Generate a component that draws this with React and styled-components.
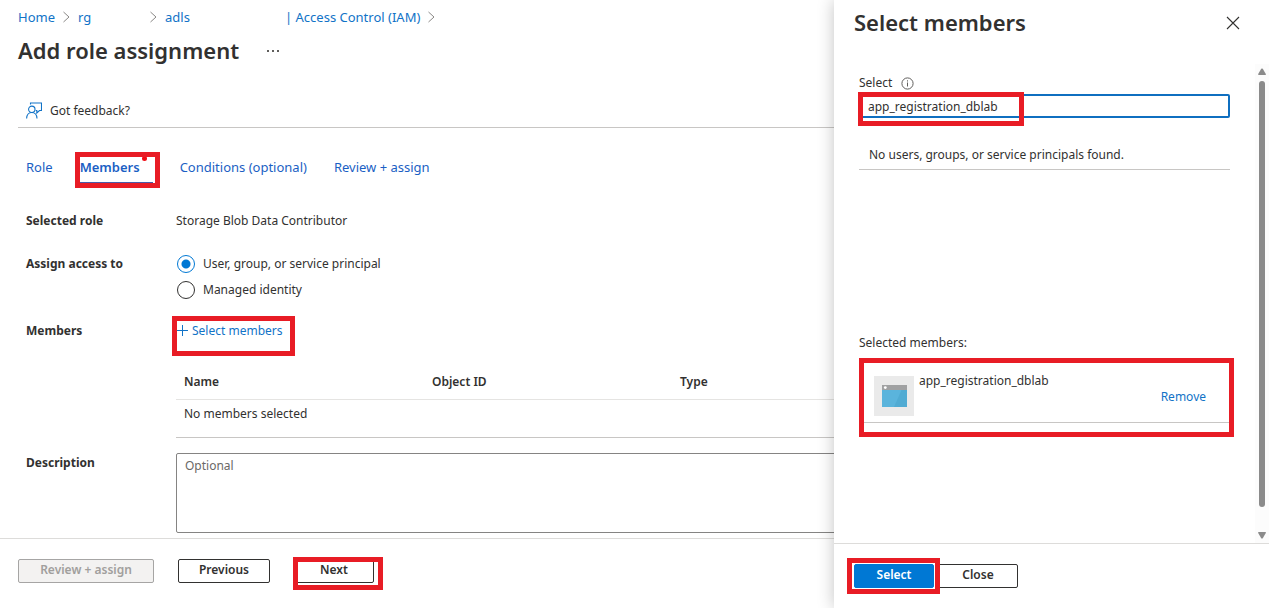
import React, { useState } from "react";
import styled, { createGlobalStyle } from "styled-components";

const Global = createGlobalStyle`
  * { box-sizing: border-box; }
  body {
    margin: 0;
    background: #fff;
    color: #323130;
    font: 12px/20px "Noto Sans", "Segoe UI", sans-serif;
  }
  button, input, textarea { font: inherit; color: inherit; }
  h1, h2, p { margin: 0; }
`;

const Page = styled.div`
  position: relative;
  display: flex;
  flex-direction: column;
  min-height: 100vh;
  overflow: hidden;
`;

const Main = styled.main`
  flex: 1;
  padding: 0 0 4px 18px;
`;

/* Annotation frame laid over the part it wraps. */
const Marked = styled.div`
  position: relative;
  display: flex;
  width: ${(p) => (p.$block ? "auto" : "fit-content")};
  > * { flex: ${(p) => (p.$block ? "1" : "none")}; }
  &::after {
    content: "";
    position: absolute;
    inset: ${(p) => p.$inset};
    border: 5px solid #e81c25;
    pointer-events: none;
  }
`;

const Link = styled.a`
  color: #1173c7;
  text-decoration: none;
`;

const Breadcrumb = styled.nav`
  display: flex;
  align-items: center;
  height: 34px;
  gap: 7px;
  font-size: 13px;
  white-space: nowrap;
`;

const Crumb = styled.span`
  flex: none;
  width: ${(p) => p.$width || "auto"};
`;

const TitleRow = styled.div`
  display: flex;
  align-items: center;
  gap: 28px;
  height: 34px;
`;

const Title = styled.h1`
  padding-bottom: 2px;
  font-size: 22px;
  line-height: 32px;
  font-weight: 600;
  white-space: nowrap;
`;

const IconButton = styled.button`
  display: flex;
  align-items: center;
  gap: 8px;
  padding: 0;
  border: 0;
  background: none;
  cursor: pointer;
`;

const Toolbar = styled.div`
  display: flex;
  height: 36px;
  margin-top: 24px;
  padding: 2px 0 0 8px;
  border-bottom: 1px solid #c8c6c4;
`;

const Tabs = styled.nav`
  display: flex;
  gap: 27px;
  margin: 24px 0 27px;
  padding-left: 8px;
  font-size: 13px;
`;

const Tab = styled.a`
  position: relative;
  height: 32px;
  line-height: 30px;
  color: #1b5fc4;
  text-decoration: none;
  white-space: nowrap;
  min-width: ${(p) => (p.$active ? "73px" : "0")};
  font-weight: ${(p) => (p.$active ? 600 : 400)};
  border-bottom: 2px solid ${(p) => (p.$active ? "#4a5aa8" : "transparent")};
`;

const Dot = styled.span`
  position: absolute;
  top: 4px;
  right: 6px;
  width: 5px;
  height: 5px;
  border-radius: 50%;
  background: #f00b14;
`;

const Field = styled.div`
  display: grid;
  grid-template-columns: 150px 1fr;
  padding-left: 8px;
  margin-bottom: ${(p) => p.$gap || "0"};
`;

const FieldLabel = styled.label`
  font-weight: 700;
  line-height: ${(p) => (p.$tall ? "26px" : "20px")};
`;

const RadioGroup = styled.div`
  display: grid;
`;

const RadioLabel = styled.label`
  display: flex;
  align-items: center;
  gap: 8px;
  height: 26px;
`;

const Radio = styled.input`
  appearance: none;
  width: 18px;
  height: 18px;
  margin: 0 0 0 1px;
  border: 1px solid #323130;
  border-radius: 50%;
  &:checked {
    border-color: #0078d4;
    background: radial-gradient(circle, #0078d4 4px, transparent 5px);
  }
`;

const AddLink = styled(IconButton)`
  gap: 4px;
  height: 20px;
  color: #1173c7;
`;

const Table = styled.table`
  width: 100%;
  margin-top: 23px;
  border-collapse: separate;
  border-spacing: 0;
  border-bottom: 1px solid #c8c6c4;
  table-layout: fixed;
`;

const Th = styled.th`
  width: ${(p) => p.$width || "auto"};
  height: 36px;
  padding: 0 8px;
  text-align: left;
  font-weight: 600;
  border-bottom: 1px solid #e5e4e2;
`;

const Td = styled.td`
  height: 37px;
  padding: 4px 8px;
  vertical-align: top;
`;

const TextArea = styled.textarea`
  display: block;
  width: 100%;
  height: 80px;
  padding: 2px 8px;
  border: 1px solid #858483;
  border-radius: 2px;
  resize: none;
  &::placeholder { color: #6a6866; }
`;

const Footer = styled.footer`
  display: flex;
  align-items: flex-start;
  gap: 24px;
  height: 70px;
  padding: 20px 18px;
  border-top: 1px solid #dddcda;
`;

const Button = styled.button`
  width: ${(p) => p.$width};
  height: 24px;
  padding: 0 0 2px;
  border: 1px solid #323130;
  border-radius: 2px;
  background: #fff;
  font-weight: 600;
  line-height: 20px;
  cursor: pointer;
  &:disabled {
    border-color: #a6a5a4;
    background: #f3f2f1;
    color: #a19f9d;
  }
  ${(p) => p.$primary && "background: #0078d4; border-color: #0078d4; color: #fff;"}
`;

const Drawer = styled.aside`
  position: absolute;
  inset: 0 0 0 auto;
  width: 435px;
  display: flex;
  flex-direction: column;
  background: #fff;
  box-shadow: 0 0 16px rgba(0, 0, 0, 0.24);
`;

const DrawerHeader = styled.header`
  display: flex;
  align-items: center;
  justify-content: space-between;
  height: 46px;
  margin-bottom: 18px;
  padding: 0 29px 0 20px;
`;

const DrawerBody = styled.div`
  display: flex;
  flex: 1;
`;

const DrawerContent = styled.div`
  flex: 1;
  padding: 9px 25px 0;
`;

const SelectLabel = styled.label`
  display: flex;
  align-items: center;
  gap: 9px;
  margin-bottom: 1px;
`;

const SearchInput = styled.input`
  display: block;
  width: 100%;
  height: 24px;
  padding: 0 7px;
  border: 2px solid #0f6fc0;
  border-radius: 2px;
  outline: 0;
`;

const Results = styled.div`
  min-height: 215px;
  padding-top: 20px;
`;

const Empty = styled.p`
  padding: 7px 10px 4px;
  border-bottom: 1px solid #c8c6c4;
`;

const Member = styled.div`
  display: flex;
  align-items: flex-end;
  gap: 5px;
  height: 57px;
  margin-top: 13px;
  padding: 5px 24px 6px 15px;
  border-bottom: 1px solid #c8c6c4;
`;

const MemberName = styled.span`
  flex: 1;
  align-self: flex-start;
`;

const RemoveLink = styled(Link)`
  line-height: 38px;
`;

const Avatar = styled.span`
  display: grid;
  place-items: center;
  width: 40px;
  height: 40px;
  background: #eaeaea;
`;

const Scrollbar = styled.div`
  display: flex;
  flex-direction: column;
  align-items: center;
  gap: 6px;
  width: 14px;
  padding: 4px 0;
  background: #fcfcfc;
`;

const Thumb = styled.span`
  width: 6px;
  flex: 1;
  margin-bottom: 19px;
  border-radius: 3px;
  background: #8b8b8b;
`;

const DrawerFooter = styled.footer`
  display: flex;
  align-items: flex-start;
  gap: 4px;
  height: 65px;
  padding: 20px;
  border-top: 1px solid #dddcda;
`;

const Chevron = () => (
  <svg width="9" height="12" viewBox="0 0 9 12" fill="none" stroke="#8a8886" aria-hidden="true">
    <path d="M1.500 1 7 6l-5.500 5" />
  </svg>
);

const FeedbackIcon = () => (
  <svg width="16" height="17" viewBox="0 0 16 17" fill="none" stroke="#1173c7" strokeWidth="1.100" aria-hidden="true">
    <path d="M4.500 2.500V1h11v7.500h-2L10.800 11V8.500h-1" />
    <circle cx="5.800" cy="7.300" r="3.200" />
    <path d="M.6 16.500c.2-3.500 2.200-6 5.200-6s5 2.500 5.200 6" />
  </svg>
);

const CloseIcon = () => (
  <svg width="14" height="14" viewBox="0 0 14 14" fill="none" stroke="#323130" strokeWidth="1.100">
    <path d="m1 1 12 12M13 1 1 13" />
  </svg>
);

const PlusIcon = () => (
  <svg width="12" height="12" viewBox="0 0 12 12" fill="none" stroke="#1173c7" aria-hidden="true">
    <path d="M6.500 0v11M1 5.500h11" />
  </svg>
);

const InfoIcon = () => (
  <svg width="13" height="13" viewBox="0 0 13 13" fill="none" stroke="#605e5c" aria-hidden="true">
    <circle cx="6.500" cy="6.500" r="5.600" />
    <path d="M6.500 5.500v4M6.500 3.300v1.200" />
  </svg>
);

const AppIcon = () => (
  <svg width="25" height="22" viewBox="0 0 25 22" aria-hidden="true">
    <path fill="#5ab4dc" d="M0 4h25v18H0z" />
    <path fill="#50abd3" d="M20 4h5v18H12z" />
    <path fill="#a0a1a2" d="M0 0h25v5H0z" />
    <circle cx="3.300" cy="2.600" r="1.400" fill="#fff" />
  </svg>
);

const Arrow = ({ down }) => (
  <svg width="8" height="7" viewBox="0 0 8 7" fill="#8b8b8b" aria-hidden="true">
    <path d={down ? "M.5 0h7q.6.3.3 1L4.800 6.200q-.8.8-1.600 0L.2 1Q0 .3.500 0" : "M.5 7h7q.6-.3.3-1L4.800.8q-.8-.8-1.600 0L.2 6q-.2.7.3 1"} />
  </svg>
);

export default function App() {
  const [access, setAccess] = useState("user");
  const [query, setQuery] = useState("app_registration_dblab");

  return (
    <>
      <Global />
      <Page>
        <Main>
          <Breadcrumb aria-label="Breadcrumb">
            <Crumb><Link href="#home">Home</Link></Crumb>
            <Chevron />
            <Crumb $width="64px"><Link href="#rg">rg</Link></Crumb>
            <Chevron />
            <Crumb $width="113px"><Link href="#adls">adls</Link></Crumb>
            <Crumb><Link href="#iam">| Access Control (IAM)</Link></Crumb>
            <Chevron />
          </Breadcrumb>
          <TitleRow>
            <Title>Add role assignment</Title>
            <IconButton aria-label="More">
              <svg width="12" height="2" viewBox="0 0 12 2" fill="#605e5c">
                <path d="M0 0h2v2H0zM5 0h2v2H5zM10 0h2v2h-2z" />
              </svg>
            </IconButton>
          </TitleRow>
          <Toolbar>
            <IconButton><FeedbackIcon />Got feedback?</IconButton>
          </Toolbar>
          <Tabs>
            <Tab href="#role">Role</Tab>
            <Marked $inset="0 -7px -4px -5px">
              <Tab href="#members" $active>Members<Dot /></Tab>
            </Marked>
            <Tab href="#conditions">Conditions (optional)</Tab>
            <Tab href="#review">Review + assign</Tab>
          </Tabs>
          <Field $gap="20px">
            <FieldLabel as="span">Selected role</FieldLabel>
            <span>Storage Blob Data Contributor</span>
          </Field>
          <Field $gap="18px">
            <FieldLabel as="span" id="access-label" $tall>Assign access to</FieldLabel>
            <RadioGroup role="radiogroup" aria-labelledby="access-label">
              <RadioLabel>
                <Radio type="radio" name="access" checked={access === "user"} onChange={() => setAccess("user")} />
                User, group, or service principal
              </RadioLabel>
              <RadioLabel>
                <Radio type="radio" name="access" checked={access === "managed"} onChange={() => setAccess("managed")} />
                Managed identity
              </RadioLabel>
            </RadioGroup>
          </Field>
          <Field $gap="15px">
            <FieldLabel as="span">Members</FieldLabel>
            <div>
              <Marked $inset="-5px -12px -15px -4px">
                <AddLink><PlusIcon />Select members</AddLink>
              </Marked>
              <Table>
                <thead>
                  <tr>
                    <Th $width="248px">Name</Th>
                    <Th $width="248px">Object ID</Th>
                    <Th>Type</Th>
                  </tr>
                </thead>
                <tbody>
                  <tr><Td colSpan={3}>No members selected</Td></tr>
                </tbody>
              </Table>
            </div>
          </Field>
          <Field>
            <FieldLabel htmlFor="description">Description</FieldLabel>
            <TextArea id="description" placeholder="Optional" />
          </Field>
        </Main>
        <Footer>
          <Button $width="136px" disabled>Review + assign</Button>
          <Button $width="92px">Previous</Button>
          <Marked $inset="-2px -9px -7px -1px">
            <Button $width="80px">Next</Button>
          </Marked>
        </Footer>

        <Drawer aria-label="Select members">
          <DrawerHeader>
            <Title as="h2">Select members</Title>
            <IconButton aria-label="Close"><CloseIcon /></IconButton>
          </DrawerHeader>
          <DrawerBody>
            <DrawerContent>
              <SelectLabel htmlFor="search">Select <InfoIcon /></SelectLabel>
              <Marked $block $inset="-2px 206px -8px -1px">
                <SearchInput id="search" value={query} onChange={(e) => setQuery(e.target.value)} />
              </Marked>
              <Results>
                <Empty>No users, groups, or service principals found.</Empty>
              </Results>
              <p>Selected members:</p>
              <Marked $block $inset="5px -4px -14px 0">
                <Member>
                  <Avatar><AppIcon /></Avatar>
                  <MemberName>app_registration_dblab</MemberName>
                  <RemoveLink href="#remove">Remove</RemoveLink>
                </Member>
              </Marked>
            </DrawerContent>
            <Scrollbar aria-hidden="true">
              <Arrow />
              <Thumb />
              <Arrow down />
            </Scrollbar>
          </DrawerBody>
          <DrawerFooter>
            <Marked $inset="-6px -6px -6px -7px">
              <Button $width="80px" $primary>Select</Button>
            </Marked>
            <Button $width="80px">Close</Button>
          </DrawerFooter>
        </Drawer>
      </Page>
    </>
  );
}
